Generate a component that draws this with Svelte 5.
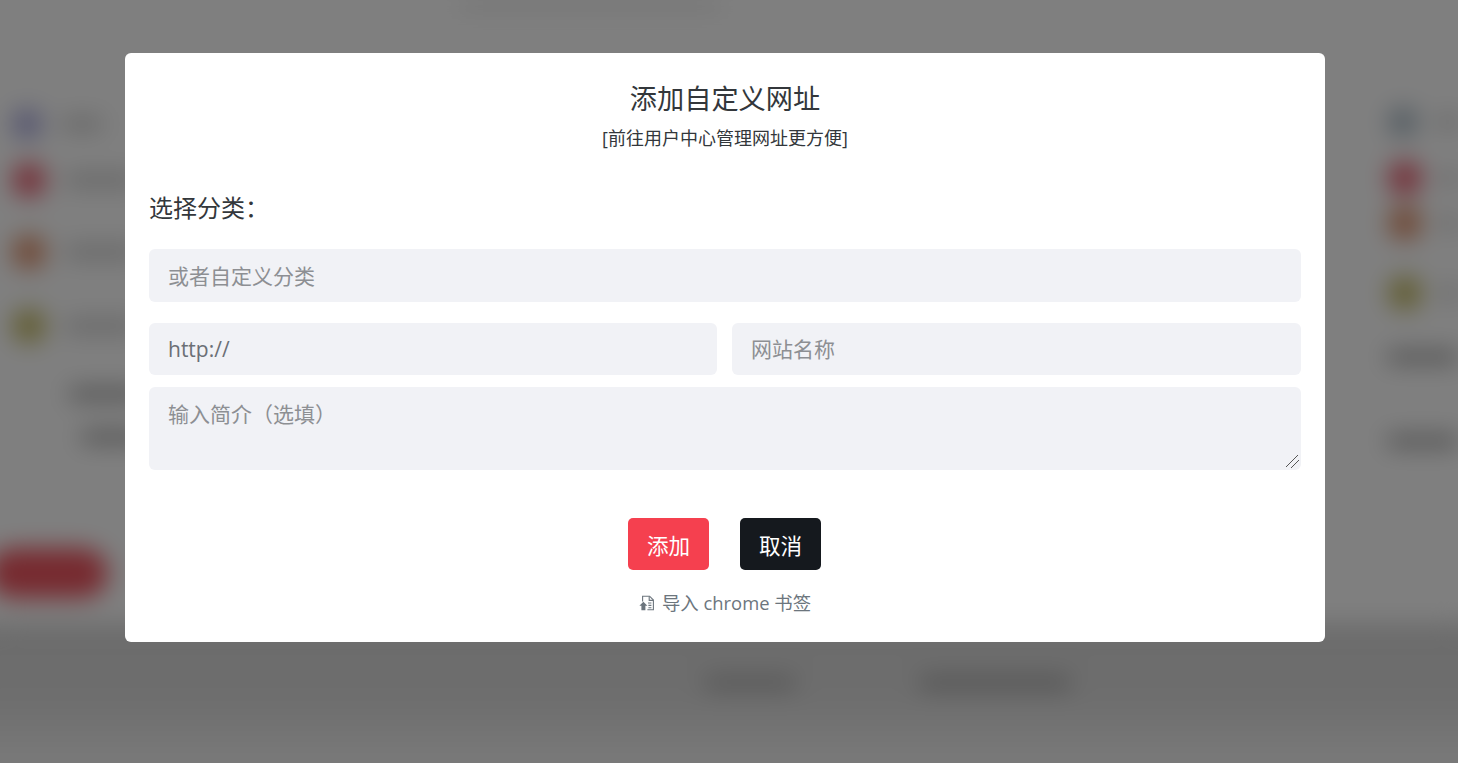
<script>
  const leftRows = [
    { color: "#a9a9e0", size: 30, gap: 24, line: 40 },
    { color: "#ea5f70", size: 34, gap: 38, line: 70 },
    { color: "#e0906a", size: 34, gap: 40, line: 70 },
    { color: "#c4ba62", size: 34, gap: 0, line: 70 }
  ];
  const rightRows = [
    { color: "#a9bac6", size: 30, gap: 24 },
    { color: "#ea5f70", size: 34, gap: 11 },
    { color: "#e0906a", size: 34, gap: 36 },
    { color: "#c4ba62", size: 34, gap: 0 }
  ];
</script>

<div class="backdrop" aria-hidden="true">
  <div class="page">
    <div class="top"></div>
    <div class="columns">
      <aside class="side left">
        {#each leftRows as row}
          <div class="row" style="margin-bottom: {row.gap}px">
            <span class="dot" style="width: {row.size}px; height: {row.size}px; background: {row.color}"></span>
            <span class="line" style="width: {row.line}px"></span>
          </div>
        {/each}
        <div class="links">
          <span class="line wide"></span>
          <span class="line wide short"></span>
        </div>
        <div class="pill"></div>
      </aside>
      <aside class="side right">
        {#each rightRows as row}
          <div class="row" style="margin-bottom: {row.gap}px">
            <span class="dot" style="width: {row.size}px; height: {row.size}px; background: {row.color}"></span>
            <span class="line"></span>
          </div>
        {/each}
        <div class="links">
          <span class="line wide"></span>
          <span class="line wide"></span>
        </div>
      </aside>
    </div>
    <footer class="band">
      <span class="line foot-a"></span>
      <span class="line foot-b"></span>
    </footer>
  </div>
</div>

<div class="overlay">
  <div class="modal">
    <h2>添加自定义网址</h2>
    <p class="hint">[前往用户中心管理网址更方便]</p>
    <h3>选择分类：</h3>
    <input class="field custom" type="text" placeholder="或者自定义分类" />
    <div class="pair">
      <input class="field" type="text" value="http://" />
      <input class="field" type="text" placeholder="网站名称" />
    </div>
    <textarea class="field intro" placeholder="输入简介（选填）"></textarea>
    <div class="actions">
      <button class="btn add">添加</button>
      <button class="btn cancel">取消</button>
    </div>
    <a class="import" href="#import">
      <svg viewBox="0 0 16 16" width="16" height="16" fill="none" stroke="currentColor" stroke-width="1.1">
        <path d="M3.6 6.4V1.2h7l3.8 3.8v9.8H8.4" />
        <path d="M10.2 1.4v4h4" />
        <path d="M9 8h3.4M9.4 10.4h3M9.4 12.8h3" stroke-width="1.1" />
        <path d="M4.4 6.8 0.4 10.8h2v4.4h4v-4.4h2z" fill="currentColor" stroke="none" />
      </svg>
      <span>导入 chrome 书签</span>
    </a>
  </div>
</div>

<style>
  :global(body) {
    margin: 0;
    overflow: hidden;
    background: #fff;
    font-family: "Open Sans", "Noto Sans CJK SC", sans-serif;
  }

  .backdrop {
    height: 763px;
    overflow: hidden;
  }

  .page {
    height: 763px;
    display: flex;
    flex-direction: column;
    background: #fff;
    filter: blur(12px);
  }

  .top {
    flex-shrink: 0;
    width: 260px;
    height: 10px;
    margin-left: 460px;
    background: #e6e6e6;
  }

  .columns {
    flex: 1;
    display: flex;
    justify-content: space-between;
    min-height: 0;
  }

  .side {
    width: 136px;
    padding-top: 99px;
    box-sizing: border-box;
  }

  .side.left {
    padding-left: 12px;
  }

  .side.right {
    width: 70px;
    padding-top: 97px;
  }

  .row {
    display: flex;
    align-items: center;
    gap: 20px;
  }

  .dot {
    flex-shrink: 0;
    border-radius: 50%;
  }

  .line {
    display: block;
    height: 12px;
    width: 70px;
    background: #c4c4c4;
  }

  .links {
    display: flex;
    flex-direction: column;
    gap: 33px;
    padding: 46px 0 0 58px;
  }

  .right .links {
    padding: 42px 0 0 0;
    gap: 74px;
  }

  .line.wide {
    background: #8a8a8a;
    height: 10px;
  }

  .line.short {
    margin-left: 12px;
    width: 60px;
  }

  .pill {
    width: 120px;
    height: 50px;
    margin: 106px 0 0 -24px;
    border-radius: 25px;
    background: #ee5560;
  }

  .band {
    flex-shrink: 0;
    height: 180px;
    margin: 0 -30px -40px;
    box-sizing: border-box;
    padding: 54px 0 0 316px;
    display: flex;
    align-items: flex-start;
    justify-content: center;
    gap: 125px;
    background: linear-gradient(#d8d8d8, #dcdcdc 43%, #f4f4f4 78%);
  }

  .line.foot-a {
    width: 90px;
    background: #a6a6a6;
  }

  .line.foot-b {
    width: 150px;
    background: #a0a0a0;
  }

  .overlay {
    position: fixed;
    inset: 0;
    box-sizing: border-box;
    background: rgba(0, 0, 0, 0.5);
    display: flex;
    align-items: flex-start;
    justify-content: center;
    padding: 53px 8px 0 0;
  }

  .modal {
    width: 1200px;
    height: 589px;
    box-sizing: border-box;
    padding: 25px 24px 24px;
    background: #fff;
    border-radius: 6px;
    color: #33373b;
    display: flex;
    flex-direction: column;
  }

  h2 {
    margin: 0;
    font-size: 27.2px;
    font-weight: 400;
    line-height: 42px;
    text-align: center;
  }

  .hint {
    margin: 4px 0 0;
    font-size: 18px;
    line-height: 28px;
    text-align: center;
  }

  h3 {
    margin: 38px 0 0;
    font-size: 24px;
    font-weight: 400;
    line-height: 36px;
  }

  .field {
    box-sizing: border-box;
    width: 100%;
    border: 0;
    outline: 0;
    margin: 0;
    padding: 0 19px;
    border-radius: 6px;
    background: #f1f2f6;
    color: #6b6f75;
    font: inherit;
    font-size: 21px;
    height: 52px;
    display: block;
  }

  .field::placeholder {
    color: #8d8f93;
    opacity: 1;
  }

  .custom {
    margin-top: 23px;
    height: 53px;
  }

  .pair {
    display: grid;
    grid-template-columns: 568px 1fr;
    gap: 15px;
    margin-top: 21px;
  }

  .intro {
    margin-top: 12px;
    height: 83px;
    padding: 11px 19px;
    line-height: 32px;
    resize: vertical;
  }

  .intro::-webkit-resizer {
    background: linear-gradient(
        135deg,
        transparent 44%,
        #555 44%,
        #555 48%,
        transparent 48%,
        transparent 67%,
        #555 67%,
        #555 71%,
        transparent 71%
      )
      0 0 / 13px 13px no-repeat;
  }

  .actions {
    display: flex;
    justify-content: center;
    gap: 31px;
    margin-top: 48px;
    padding-right: 1px;
  }

  .btn {
    width: 81px;
    height: 52px;
    border: 0;
    border-radius: 5px;
    padding: 0;
    color: #fff;
    font: inherit;
    font-size: 21.6px;
  }

  .add {
    background: #f5404f;
  }

  .cancel {
    background: #15191e;
  }

  .import {
    margin-top: 20px;
    display: flex;
    align-items: center;
    justify-content: center;
    gap: 7px;
    color: #6c757d;
    font-size: 18.4px;
    line-height: 26px;
    text-decoration: none;
  }

  .import svg {
    flex-shrink: 0;
  }
</style>
